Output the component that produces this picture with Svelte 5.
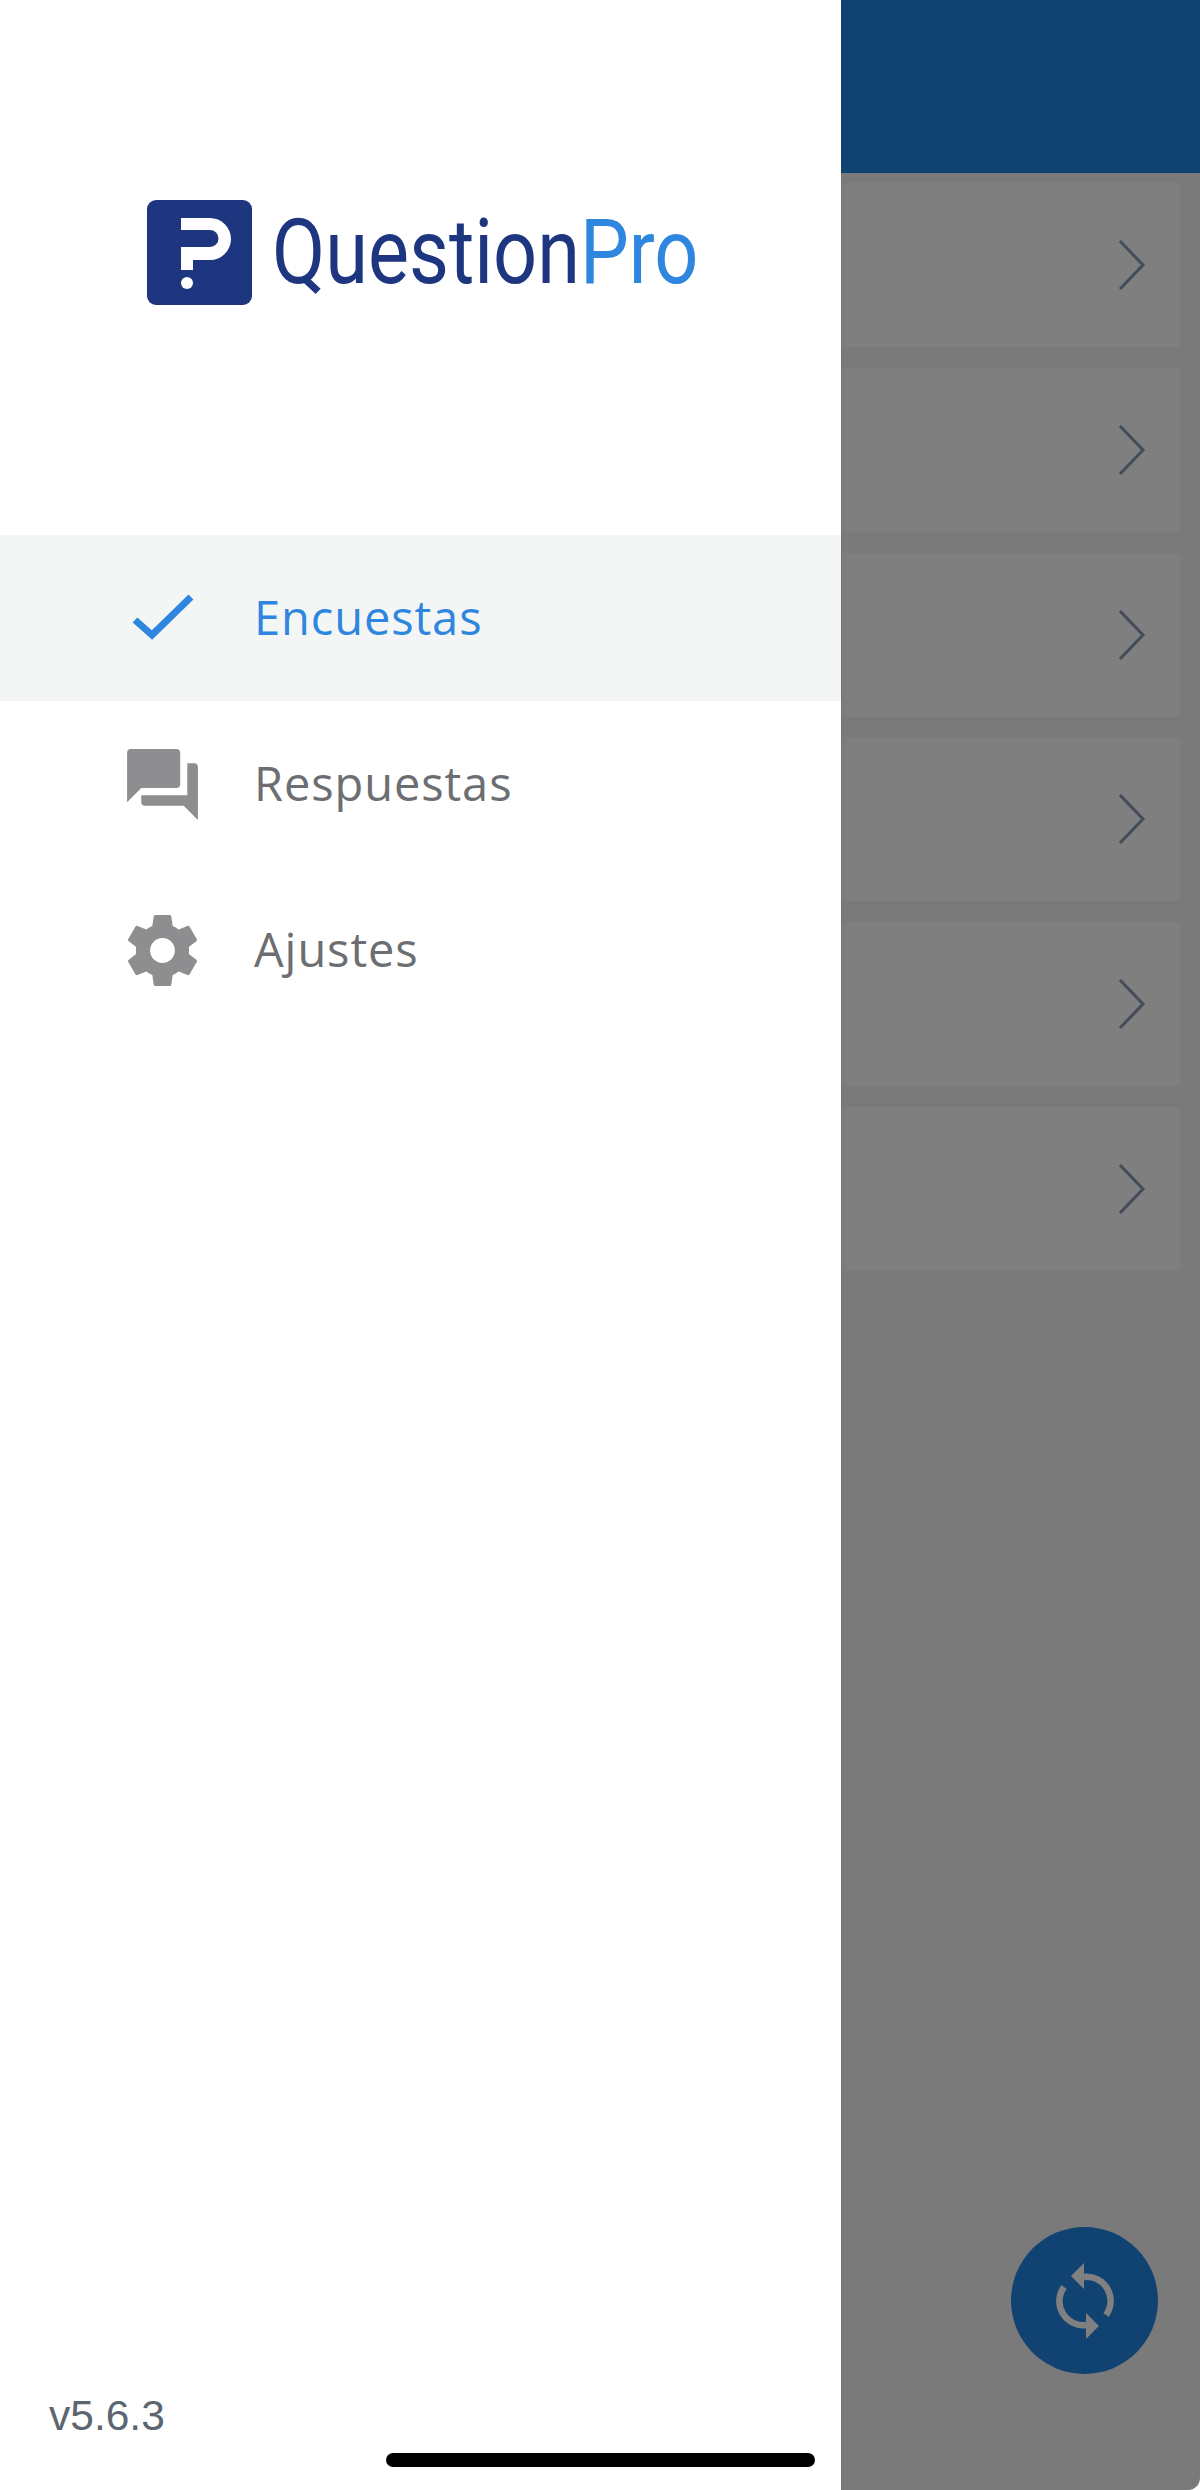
<script>
	// Main list behind the drawer, only the row shells are visible under the overlay
	const rows = [1, 2, 3, 4, 5, 6];
</script>

<div class="screen">
	<aside class="drawer">
		<div class="logo">
			<svg class="mark" viewBox="0 0 105 105" width="105" height="105" aria-hidden="true">
				<rect width="105" height="105" rx="9" fill="#1e3580" />
				<path
					d="M34 18H63A21 21 0 0 1 63 60H46V70H34V47H63A8.5 8.5 0 0 0 63 30H34Z"
					fill="#fff"
				/>
				<circle cx="40" cy="83" r="6" fill="#fff" />
			</svg>
			<div class="wordmark">Question<span class="pro">Pro</span></div>
		</div>

		<nav class="menu">
			<div class="item active">
				<svg class="icon" viewBox="0 0 85 85" width="85" height="85" aria-hidden="true">
					<path d="M15 28L32 43L71 5" transform="translate(0 16)" fill="none" stroke="#2e86de" stroke-width="7" />
				</svg>
				<span>Encuestas</span>
			</div>
			<div class="item">
				<svg class="icon" viewBox="0 0 24 24" width="85" height="85" aria-hidden="true">
					<path
						fill="#8e8e90"
						d="M21 6h-2v9H6v2c0 .55.45 1 1 1h11l4 4V7c0-.55-.45-1-1-1zm-4 6V3c0-.55-.45-1-1-1H3c-.55 0-1 .45-1 1v14l4-4h10c.55 0 1-.45 1-1z"
					/>
				</svg>
				<span>Respuestas</span>
			</div>
			<div class="item">
				<svg class="icon" viewBox="0 0 24 24" width="85" height="85" aria-hidden="true">
					<path
						fill="#8e8e90"
						d="M19.43 12.98c.04-.32.07-.64.07-.98s-.03-.66-.07-.98l2.11-1.65c.19-.15.24-.42.12-.64l-2-3.46c-.12-.22-.39-.3-.61-.22l-2.49 1c-.52-.4-1.08-.73-1.69-.98l-.38-2.65C14.46 2.18 14.25 2 14 2h-4c-.25 0-.46.18-.49.42l-.38 2.65c-.61.25-1.17.59-1.69.98l-2.49-1c-.23-.09-.49 0-.61.22l-2 3.46c-.13.22-.07.49.12.64l2.11 1.65c-.04.32-.07.65-.07.98s.03.66.07.98l-2.11 1.65c-.19.15-.24.42-.12.64l2 3.46c.12.22.39.3.61.22l2.49-1c.52.4 1.08.73 1.69.98l.38 2.65c.03.24.24.42.49.42h4c.25 0 .46-.18.49-.42l.38-2.65c.61-.25 1.17-.59 1.69-.98l2.49 1c.23.09.49 0 .61-.22l2-3.46c.12-.22.07-.49-.12-.64l-2.11-1.65zM12 15.5c-1.93 0-3.5-1.57-3.5-3.5s1.57-3.5 3.5-3.5 3.5 1.57 3.5 3.5-1.57 3.5-3.5 3.5z"
					/>
				</svg>
				<span>Ajustes</span>
			</div>
		</nav>

		<div class="version">v5.6.3</div>
		<div class="home-bar"></div>
	</aside>

	<main class="content">
		<header class="topbar"></header>
		<div class="list">
			{#each rows as row (row)}
				<div class="row">
					<svg viewBox="0 0 28 52" width="28" height="52" aria-hidden="true">
						<path d="M2 2L25 26L2 50" fill="none" stroke="#434c59" stroke-width="3" />
					</svg>
				</div>
			{/each}
		</div>
		<button class="fab" aria-label="Sincronizar">
			<svg viewBox="-40 -40 80 80" width="80" height="80" aria-hidden="true">
				<path d="M-1 -24A24 24 0 0 1 21 14" fill="none" stroke="#808080" stroke-width="6.5" />
				<path d="M-14 -25L-1 -38V-12Z" fill="#808080" />
				<g transform="rotate(180)">
					<path d="M-1 -24A24 24 0 0 1 21 14" fill="none" stroke="#808080" stroke-width="6.5" />
					<path d="M-14 -25L-1 -38V-12Z" fill="#808080" />
				</g>
			</svg>
		</button>
	</main>
</div>

<style>
	:global(body) {
		margin: 0;
		background: #fff;
	}

	.screen {
		display: flex;
		width: 1200px;
		height: 2490px;
		overflow: hidden;
	}

	.drawer {
		position: relative;
		display: flex;
		flex-direction: column;
		width: 841px;
		flex: none;
		background: #fff;
	}

	.logo {
		display: flex;
		align-items: flex-start;
		height: 105px;
		margin: 200px 0 0 147px;
	}

	.mark {
		flex: none;
	}

	.wordmark {
		margin-left: 20px;
		font-family: Roboto, sans-serif;
		font-size: 90px;
		font-weight: 400;
		line-height: 105px;
		color: #1e3580;
		white-space: nowrap;
		transform: scaleX(0.86);
		transform-origin: left center;
	}

	.pro {
		color: #2e86de;
	}

	.menu {
		margin-top: 230px;
	}

	.item {
		display: flex;
		align-items: center;
		gap: 49px;
		height: 166px;
		padding-left: 120px;
		font-family: "Open Sans", sans-serif;
		font-size: 47px;
		letter-spacing: 0.9px;
		color: #6c6e72;
	}

	.item span {
		margin-top: -3px;
	}

	.item.active {
		background: #f4f6f6;
		color: #2e86de;
	}

	.icon {
		flex: none;
	}

	.version {
		margin: auto 0 51px 49px;
		font-family: "Liberation Sans", Arial, sans-serif;
		font-size: 42.5px;
		line-height: 46px;
		color: #5d6670;
	}

	.home-bar {
		position: absolute;
		left: 386px;
		bottom: 23px;
		width: 429px;
		height: 14px;
		border-radius: 7px;
		background: #000;
	}

	.content {
		position: relative;
		flex: 1;
		background: #7a7a7a;
		border-left: 1px solid #747474;
		border-bottom-right-radius: 12px;
	}

	.topbar {
		height: 173px;
		margin-left: -1px;
		background: #114372;
	}

	.list {
		display: flex;
		flex-direction: column;
		gap: 20.8px;
		padding: 10px 20px 0 0;
	}

	.row {
		display: flex;
		align-items: center;
		justify-content: flex-end;
		height: 164px;
		padding-right: 34px;
		border-left: 5px solid #7d7d7d;
		border-radius: 0 4px 4px 0;
		background: #7f7f7f;
	}

	.fab {
		position: absolute;
		left: 169px;
		top: 2227px;
		display: flex;
		align-items: center;
		justify-content: center;
		width: 147px;
		height: 147px;
		padding: 0;
		border: none;
		border-radius: 50%;
		background: #114372;
	}
</style>
